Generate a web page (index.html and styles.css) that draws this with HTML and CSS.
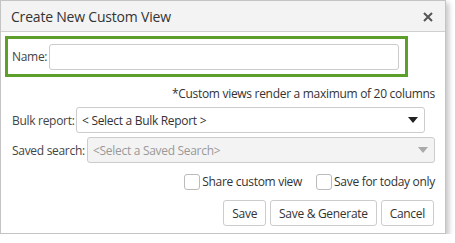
FILE: index.html
```html
<!DOCTYPE html>
<html lang="en">
<head>
    <meta charset="UTF-8">
    <meta name="viewport" content="width=device-width, initial-scale=1.0">
    <title>Create New Custom View</title>
    <link rel="stylesheet" href="styles.css">
</head>
<body>
    <div class="dialog">
        <div class="dialog-header">
            <span class="title">Create New Custom View</span>
            <span class="close">
                <svg width="10" height="10" viewBox="0 0 10 10">
                    <path d="M1 1 L9 9 M9 1 L1 9" stroke="#555" stroke-width="2" fill="none"/>
                </svg>
            </span>
        </div>

        <div class="dialog-body">
            <div class="name-box">
                <label class="name-label" for="name">Name:</label>
                <input class="name-input" id="name" type="text">
            </div>

            <div class="note">*Custom views render a maximum of 20 columns</div>

            <div class="field-row">
                <span class="field-label bulk-label">Bulk report:</span>
                <div class="select bulk">
                    <span>&lt; Select a Bulk Report &gt;</span>
                    <span class="caret"></span>
                </div>
            </div>

            <div class="field-row">
                <span class="field-label saved-label">Saved search:</span>
                <div class="select saved disabled">
                    <span>&lt;Select a Saved Search&gt;</span>
                    <span class="caret"></span>
                </div>
            </div>

            <div class="checks">
                <label class="check"><span class="box"></span>Share custom view</label>
                <label class="check"><span class="box"></span>Save for today only</label>
            </div>

            <div class="buttons">
                <button class="btn">Save</button>
                <button class="btn">Save &amp; Generate</button>
                <button class="btn">Cancel</button>
            </div>
        </div>
    </div>
</body>
</html>
```

FILE: styles.css
```css
/* General styles */
body {
    margin: 0;
    background-color: #fff;
    font-family: "Open Sans", "Noto Sans", sans-serif;
    font-size: 12px;
    letter-spacing: -0.3px;
    color: #333;
}

.dialog {
    width: 444px;
    height: 232px;
    border: 1px solid #c4c4c4;
    background-color: #fff;
    box-shadow: 3px 3px 5px rgba(0, 0, 0, 0.22);
}

/* Header */
.dialog-header {
    height: 30px;
    background-color: #f3f3f3;
    border-bottom: 1px solid #d0d0d0;
    display: flex;
    align-items: center;
    justify-content: space-between;
    padding: 0 12px 0 10px;
}

.title {
    font-size: 14px;
    letter-spacing: -0.2px;
    color: #333;
}

.close {
    display: flex;
    margin-top: 2px;
}

/* Body */
.dialog-body {
    padding: 4px 10px 0 4px;
}

.name-box {
    width: 393px;
    height: 35px;
    border: 3px solid #5c9f2a;
    display: flex;
    align-items: center;
    padding-left: 4px;
}

.name-label {
    width: 37px;
    flex-shrink: 0;
    color: #444;
}

.name-input {
    width: 350px;
    height: 26px;
    padding: 0;
    border: 1px solid #ccc;
    border-radius: 3px;
    box-sizing: border-box;
    outline: none;
}

.note {
    margin-top: 9px;
    height: 16px;
    line-height: 16px;
    text-align: right;
    color: #333;
}

.field-row {
    display: flex;
    align-items: center;
    margin-top: 5px;
    padding-left: 7px;
}

.field-row + .field-row {
    margin-top: 4px;
}

.field-label {
    flex-shrink: 0;
    color: #444;
}

.bulk-label {
    width: 64px;
}

.saved-label {
    width: 75px;
}

.select {
    height: 26px;
    box-sizing: border-box;
    border: 1px solid #ccc;
    border-radius: 3px;
    display: flex;
    align-items: center;
    justify-content: space-between;
    padding: 0 6px 0 5px;
    color: #333;
}

.select.bulk {
    width: 349px;
}

.select.saved {
    width: 350px;
}

.select.disabled {
    background-color: #f3f3f3;
    color: #999;
}

.caret {
    width: 0;
    height: 0;
    border-left: 5px solid transparent;
    border-right: 5px solid transparent;
    border-top: 6px solid #222;
}

.select.disabled .caret {
    border-top-color: #aaa;
}

/* Checkboxes */
.checks {
    display: flex;
    justify-content: flex-end;
    gap: 14px;
    margin-top: 10px;
    height: 17px;
}

.check {
    display: flex;
    align-items: center;
    color: #333;
}

.box {
    width: 14px;
    height: 14px;
    border: 1px solid #bbb;
    border-radius: 3px;
    margin-right: 2px;
}

/* Buttons */
.buttons {
    display: flex;
    justify-content: flex-end;
    gap: 4px;
    margin-top: 10px;
    padding-right: 1px;
}

button.btn {
    height: 26px;
    background-color: #fff;
    border: 1px solid #ccc;
    border-radius: 3px;
    font-family: inherit;
    font-size: 12px;
    letter-spacing: -0.3px;
    color: #333;
    padding: 0 8px;
}
```
